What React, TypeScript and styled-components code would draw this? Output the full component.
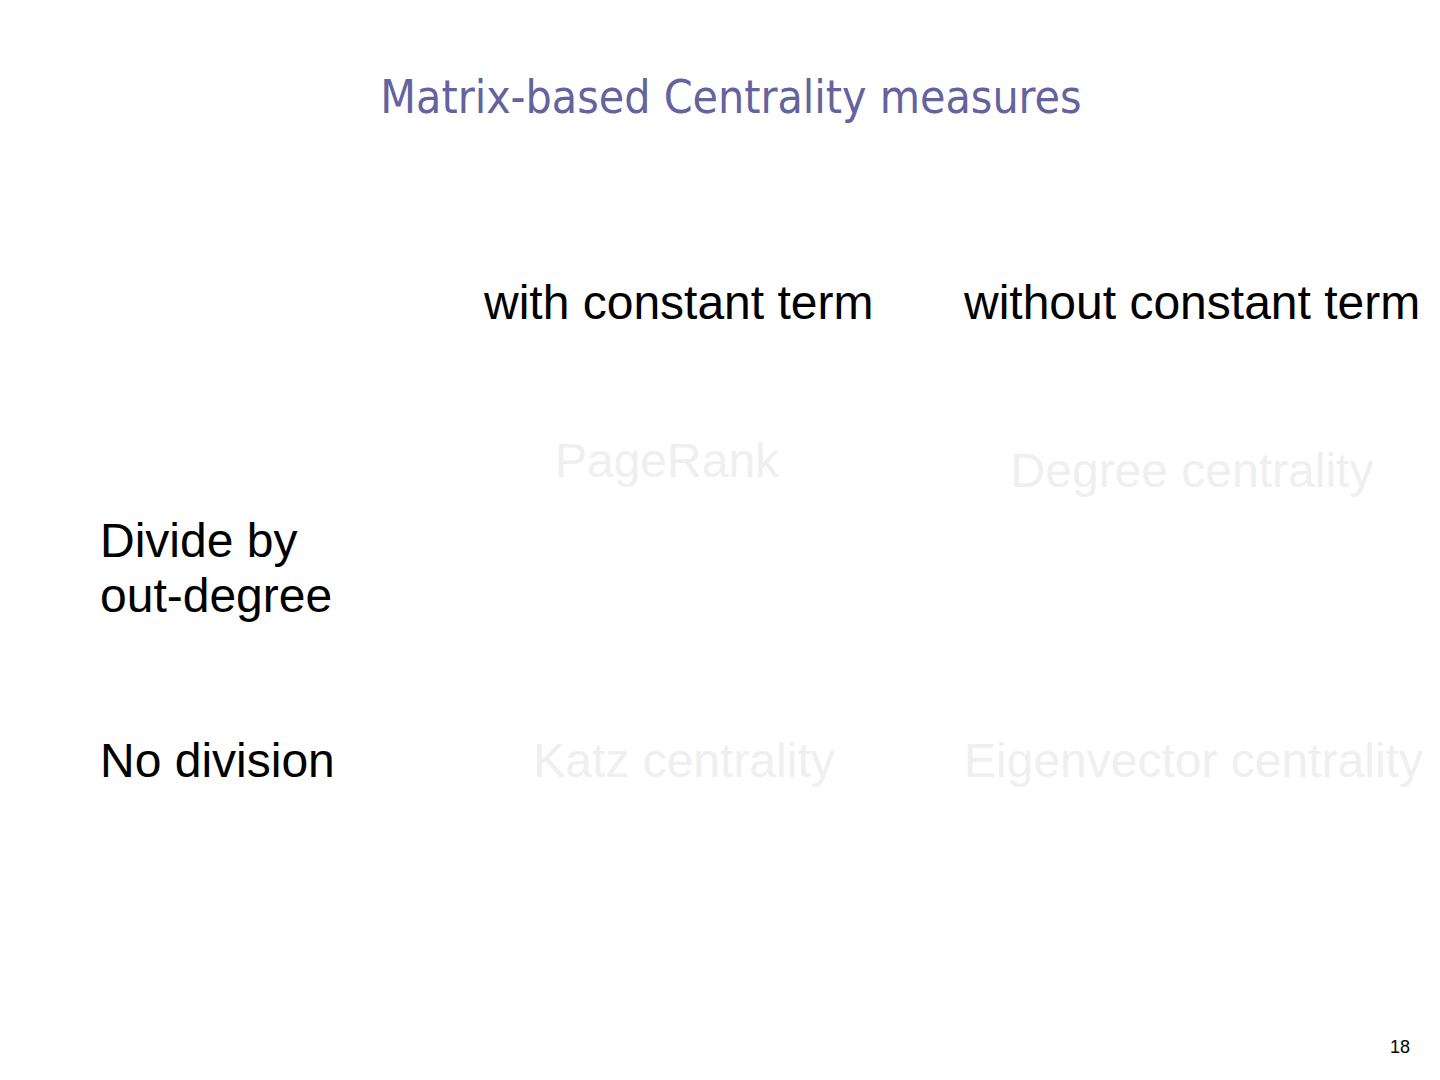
import React from "react";
import styled, { createGlobalStyle } from "styled-components";

const GlobalStyle = createGlobalStyle`
  html, body {
    margin: 0;
    padding: 0;
    background: #ffffff;
  }
`;

const Slide = styled.div`
  width: 1440px;
  height: 1080px;
  display: flex;
  flex-direction: column;
  background: #ffffff;
  font-family: "Liberation Sans", Arial, sans-serif;
  color: #000000;
  overflow: hidden;
`;

const Title = styled.h1`
  margin: 0;
  padding-top: 71px;
  padding-left: 22px;
  text-align: center;
  font-family: "DejaVu Sans Condensed", "Liberation Sans Narrow", "Liberation Sans", sans-serif;
  font-weight: normal;
  font-size: 46px;
  line-height: 53px;
  color: #63639d;
`;

const Table = styled.div`
  margin-top: 151px;
  padding-left: 100px;
  display: grid;
  grid-template-columns: 292px 388px 454px;
  grid-template-rows: 158px 300px auto;
  column-gap: 92px;
  font-size: 48px;
  line-height: 55px;
`;

const Header = styled.div`
  white-space: nowrap;
`;

const RowLabel = styled.div<{ $top?: number }>`
  margin-top: ${(p) => p.$top ?? 0}px;
  white-space: nowrap;
`;

const Ghost = styled.div<{ $dx?: number; $dy?: number }>`
  text-align: center;
  white-space: nowrap;
  color: #efefef;
  margin-top: ${(p) => p.$dy ?? 0}px;
  transform: translateX(${(p) => p.$dx ?? 0}px);
`;

const Footer = styled.div`
  margin-top: auto;
  padding: 0 30px 22px 0;
  text-align: right;
  font-family: "Liberation Sans", Arial, sans-serif;
  font-size: 18px;
`;

export default function App() {
  return (
    <>
      <GlobalStyle />
      <Slide>
        <Title>Matrix-based Centrality measures</Title>
        <Table>
          <div />
          <Header>with constant term</Header>
          <Header>without constant term</Header>

          <RowLabel $top={80}>
            Divide by
            <br />
            out-degree
          </RowLabel>
          <Ghost $dx={-11}>PageRank</Ghost>
          <Ghost $dx={1} $dy={10}>
            Degree centrality
          </Ghost>

          <RowLabel>No division</RowLabel>
          <Ghost $dx={6}>Katz centrality</Ghost>
          <Ghost $dx={0}>Eigenvector centrality</Ghost>
        </Table>
        <Footer>18</Footer>
      </Slide>
    </>
  );
}
